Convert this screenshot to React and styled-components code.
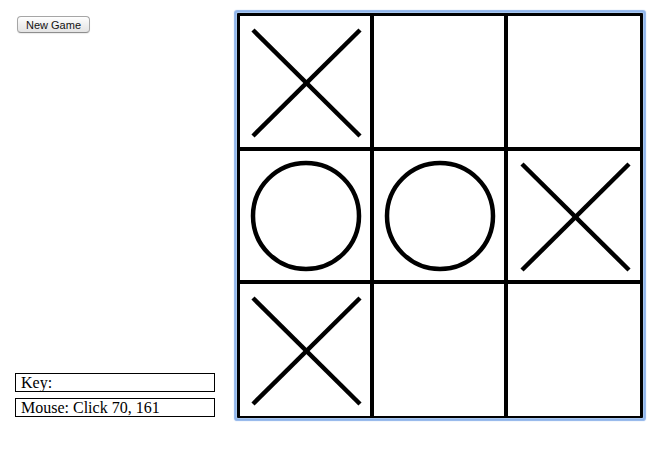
import React, { useState } from 'react';
import styled, { createGlobalStyle } from 'styled-components';

const GlobalStyle = createGlobalStyle`
  html, body {
    margin: 0;
    padding: 0;
    background: #fff;
  }
`;

const Page = styled.div`
  display: flex;
  align-items: flex-start;
  padding: 13px 0 30px 15px;
`;

const Side = styled.div`
  width: 200px;
  height: 404px;
  margin-right: 22px;
  display: flex;
  flex-direction: column;
  justify-content: space-between;
`;

const NewGame = styled.button`
  align-self: flex-start;
  margin: 3px 0 0 2px;
  width: 73px;
  height: 17px;
  padding: 0;
  font-family: "Liberation Sans", Arial, sans-serif;
  font-size: 11px;
  color: #111;
  background: linear-gradient(#ffffff, #f0f0f0 50%, #e4e4e4);
  border: 1px solid #a6a6a6;
  border-bottom-color: #8e8e8e;
  border-radius: 4px;
  box-shadow: 0 1px 1px rgba(0, 0, 0, 0.08);
`;

const Readouts = styled.div`
  display: flex;
  flex-direction: column;
  gap: 6px;
`;

const Readout = styled.div`
  height: 17px;
  border: 1px solid #000;
  padding: 0 5px;
  font-family: "Liberation Serif", "Times New Roman", serif;
  font-size: 16px;
  line-height: 18px;
  color: #000;
  white-space: nowrap;
  overflow: hidden;
`;

const Board = styled.div`
  position: relative;
  width: 406px;
  height: 405px;
  box-sizing: border-box;
  display: grid;
  grid-template-columns: 130px 130px 132px;
  grid-template-rows: 131px 129px 132px;
  gap: 4px;
  background: #000;
  padding: 3px 2px 2px 3px;
  border-radius: 1px;
  box-shadow: 0 0 0 1px #a9c8f0, 0 0 1px 3px #8fb4ea;
`;

const Cell = styled.div`
  background: #fff;
  display: flex;
  align-items: center;
  justify-content: center;
`;

const Mark = ({ type }) => {
  if (type === 'X') {
    return (
      <svg width="130" height="130" viewBox="0 0 130 130">
        <g stroke="#000" strokeWidth="4.5" strokeLinecap="butt">
          <line x1="13" y1="13" x2="120" y2="119" />
          <line x1="120" y1="13" x2="13" y2="119" />
        </g>
      </svg>
    );
  }
  if (type === 'O') {
    return (
      <svg width="130" height="130" viewBox="0 0 130 130">
        <circle cx="66" cy="65" r="53" fill="none" stroke="#000" strokeWidth="4.5" />
      </svg>
    );
  }
  return null;
};

export default function App() {
  const [cells] = useState(['X', '', '', 'O', 'O', 'X', 'X', '', '']);

  return (
    <>
      <GlobalStyle />
      <Page>
        <Side>
          <NewGame>New Game</NewGame>
          <Readouts>
            <Readout>Key:</Readout>
            <Readout>Mouse: Click 70, 161</Readout>
          </Readouts>
        </Side>
        <Board>
          {cells.map((c, i) => (
            <Cell key={i}>
              <Mark type={c} />
            </Cell>
          ))}
        </Board>
      </Page>
    </>
  );
}
